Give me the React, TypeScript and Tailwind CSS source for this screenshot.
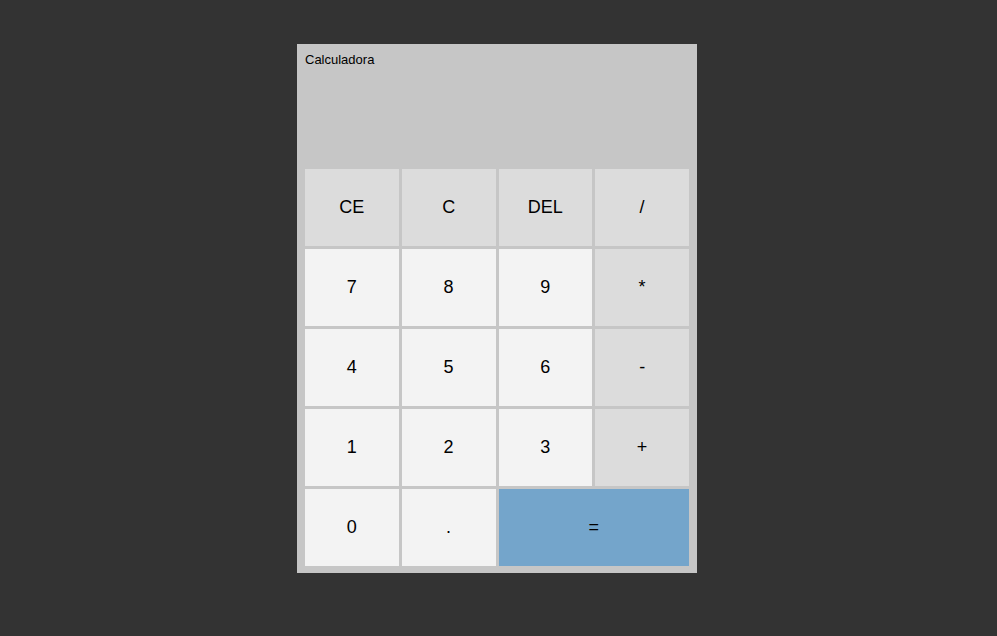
import React from "react";

type Key = { label: string; kind: "op" | "num" | "eq" };

const keys: Key[] = [
  { label: "CE", kind: "op" },
  { label: "C", kind: "op" },
  { label: "DEL", kind: "op" },
  { label: "/", kind: "op" },
  { label: "7", kind: "num" },
  { label: "8", kind: "num" },
  { label: "9", kind: "num" },
  { label: "*", kind: "op" },
  { label: "4", kind: "num" },
  { label: "5", kind: "num" },
  { label: "6", kind: "num" },
  { label: "-", kind: "op" },
  { label: "1", kind: "num" },
  { label: "2", kind: "num" },
  { label: "3", kind: "num" },
  { label: "+", kind: "op" },
  { label: "0", kind: "num" },
  { label: ".", kind: "num" },
  { label: "=", kind: "eq" },
];

const App = () => {
  return (
    <div className="min-h-[636px] w-full bg-[#333333] pt-[44px] font-['Liberation_Sans',Arial,sans-serif]">
      <div className="ml-[297px] w-[400px] bg-[#c6c6c6] px-2 pb-[7px]">
        <div className="h-[125px] pt-2 text-[13px] leading-[15px] text-black">
          Calculadora
        </div>
        <div className="grid grid-cols-4 auto-rows-[77px] gap-[3px]">
          {keys.map((k) => (
            <button
              key={k.label}
              className={
                k.kind === "eq"
                  ? "col-span-2 bg-[#74a5cb] text-[18px] text-black"
                  : k.kind === "op"
                  ? "bg-[#dcdcdc] text-[18px] text-black"
                  : "bg-[#f3f3f3] text-[18px] text-black"
              }
            >
              {k.label}
            </button>
          ))}
        </div>
      </div>
    </div>
  );
};

export default App;
